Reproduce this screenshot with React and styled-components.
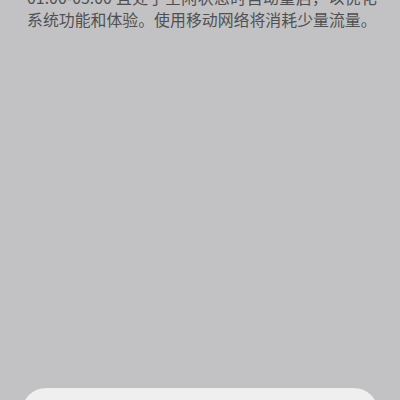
import React from 'react';
import styled, { createGlobalStyle } from 'styled-components';

const GlobalStyle = createGlobalStyle`
    html, body {
        margin: 0;
        padding: 0;
        background-color: #c2c2c4;
        overflow: hidden;
    }
`

const Screen = styled.div`
    display: flex;
    flex-direction: column;
    height: 400px;
    overflow: hidden;
    background-color: #c2c2c4;
`

const Notice = styled.p`
    margin: -13px 0 0 27px;
    width: 350px;
    font-family: "Noto Sans CJK SC", "Noto Sans", sans-serif;
    font-size: 15.9px;
    line-height: 21.5px;
    color: #505052;
    text-align: justify;
`

const Sheet = styled.div`
    margin: auto 22px -48px;
    height: 60px;
    flex-shrink: 0;
    background-color: #efefef;
    border-radius: 24px 24px 0 0;
`

function App() {
    return (
        <Screen>
            <GlobalStyle />
            <Notice>
                01:00-05:00 且处于空闲状态时自动重启，以优化系统功能和体验。使用移动网络将消耗少量流量。
            </Notice>
            <Sheet />
        </Screen>
    )
}

export default App;
